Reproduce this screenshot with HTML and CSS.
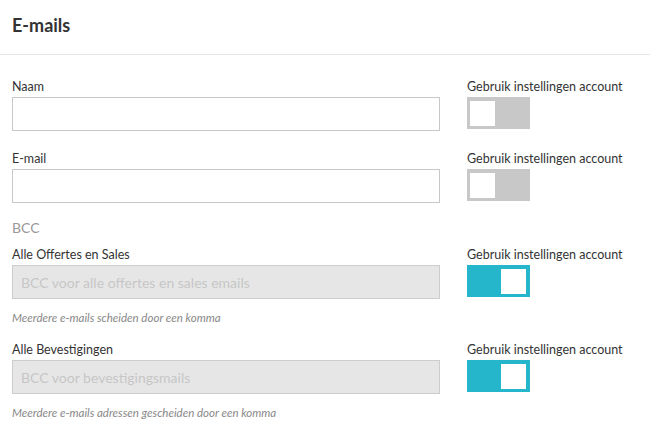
FILE: index.html
```html
<!DOCTYPE html>
<html lang="nl">
<head>
<meta charset="utf-8">
<title>E-mails</title>
<link rel="stylesheet" href="styles.css">
</head>
<body>
<header class="page-header">
  <h1 class="title">E-mails</h1>
</header>
<main class="form">
  <div class="row">
    <div class="field">
      <label class="label">Naam</label>
      <input class="input" type="text">
    </div>
    <div class="setting">
      <span class="label">Gebruik instellingen account</span>
      <span class="toggle"><span class="knob"></span></span>
    </div>
  </div>
  <div class="row row-gap">
    <div class="field">
      <label class="label">E-mail</label>
      <input class="input" type="text">
    </div>
    <div class="setting">
      <span class="label">Gebruik instellingen account</span>
      <span class="toggle"><span class="knob"></span></span>
    </div>
  </div>
  <h2 class="section">BCC</h2>
  <div class="row">
    <div class="field">
      <label class="label">Alle Offertes en Sales</label>
      <input class="input disabled" type="text" placeholder="BCC voor alle offertes en sales emails" disabled>
      <p class="help">Meerdere e-mails scheiden door een komma</p>
    </div>
    <div class="setting">
      <span class="label">Gebruik instellingen account</span>
      <span class="toggle on"><span class="knob"></span></span>
    </div>
  </div>
  <div class="row row-gap2">
    <div class="field">
      <label class="label">Alle Bevestigingen</label>
      <input class="input disabled" type="text" placeholder="BCC voor bevestigingsmails" disabled>
      <p class="help">Meerdere e-mails adressen gescheiden door een komma</p>
    </div>
    <div class="setting">
      <span class="label">Gebruik instellingen account</span>
      <span class="toggle on"><span class="knob"></span></span>
    </div>
  </div>
</main>
</body>
</html>
```

FILE: styles.css
```css
* { box-sizing: border-box; }
html, body {
  margin: 0;
  padding: 0;
  background: #fff;
  font-family: Lato, "Open Sans", sans-serif;
  color: #333;
}
.page-header {
  height: 55px;
  padding: 14px 12px 0;
  border-bottom: 1px solid #e6e6e6;
}
.title {
  margin: 0;
  font-size: 18px;
  line-height: 22px;
  font-weight: 700;
  color: #333;
}
.form {
  padding: 24px 20px 0 12px;
}
.row {
  display: grid;
  grid-template-columns: 428px 1fr;
  column-gap: 27px;
}
.row-gap { margin-top: 20px; }
.row-gap2 { margin-top: 18px; }
.field, .setting {
  display: flex;
  flex-direction: column;
  align-items: flex-start;
}
.field { align-items: stretch; }
.label {
  display: block;
  font-size: 12.5px;
  line-height: 16px;
  margin-bottom: 2px;
  color: #333;
}
.input {
  height: 34px;
  width: 100%;
  border: 1px solid #c8c8c8;
  background: #fff;
  padding: 0 8px;
  font-family: Lato, sans-serif;
  font-size: 14px;
  color: #333;
  outline: none;
  margin: 0;
  border-radius: 0;
}
.input.disabled {
  background: #e6e6e6;
  border-color: #cdcdcd;
}
.input::placeholder {
  color: #c6c6c6;
  opacity: 1;
}
.section {
  margin: 16px 0 11px;
  font-size: 14px;
  line-height: 17px;
  font-weight: 400;
  color: #999;
}
.help {
  margin: 12px 0 0;
  font-size: 11.5px;
  line-height: 13px;
  font-style: italic;
  color: #888;
}
.toggle {
  display: flex;
  align-items: center;
  justify-content: flex-start;
  width: 63px;
  height: 32px;
  padding: 0 3px;
  background: #c8c8c8;
}
.toggle.on {
  background: #26b6cc;
  justify-content: flex-end;
  padding: 0 4px;
}
.knob {
  display: block;
  width: 25px;
  height: 25px;
  background: #fff;
}
```
